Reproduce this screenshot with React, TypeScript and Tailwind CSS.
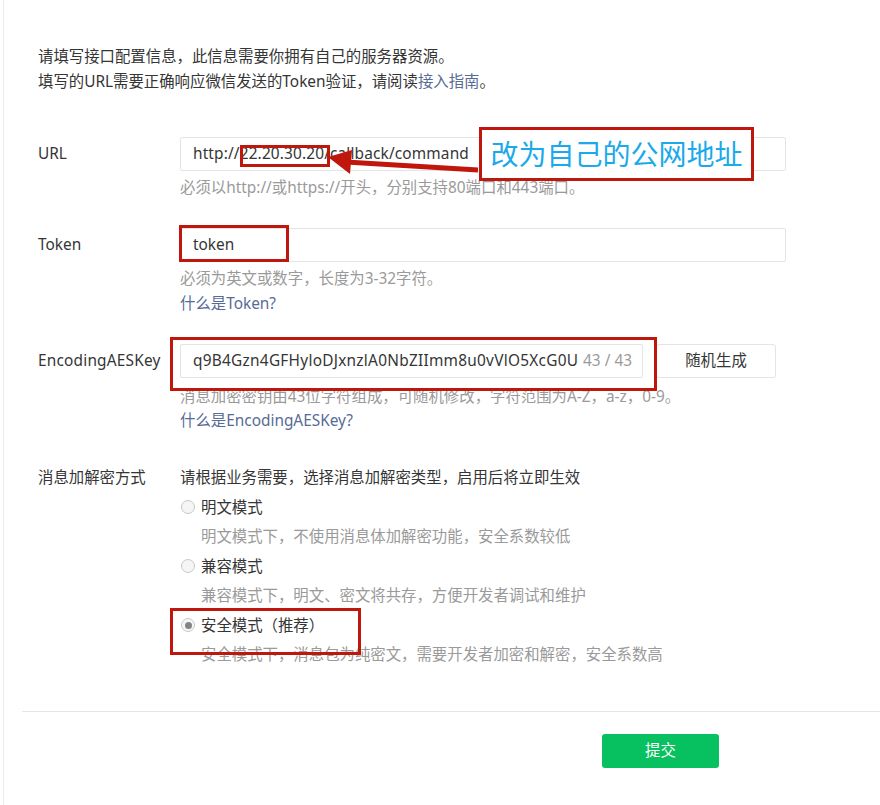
const font = "font-['Noto_Sans','Noto_Sans_CJK_SC',sans-serif]";

function Radio({ checked, label }: { checked?: boolean; label: string }) {
  return (
    <div className="flex items-center h-[29.5px]">
      <span className="ml-[1px] mr-[6px] flex h-[14px] w-[14px] items-center justify-center rounded-full border border-[#c9c9c9] bg-[#f5f5f5]">
        {checked ? <span className="h-[7px] w-[7px] rounded-full bg-[#838383]" /> : null}
      </span>
      <span>{label}</span>
    </div>
  );
}

export default function App() {
  return (
    <div className={`relative min-h-[805px] overflow-hidden bg-white text-[15.4px] text-[#353535] ${font}`}>
      <div className="ml-[3px] min-h-[805px] border-l border-[#ececec] pl-[34px] pt-[44px]">
        <div className="leading-[25px]">
          <p>请填写接口配置信息，此信息需要你拥有自己的服务器资源。</p>
          <p>
            填写的URL需要正确响应微信发送的Token验证，请阅读
            <span className="text-[#576b95]">接入指南</span>。
          </p>
        </div>

        {/* URL */}
        <div className="mt-[43px] flex">
          <div className="w-[142px] shrink-0 leading-[34px]">URL</div>
          <div className="w-[606px]">
            <div className="flex h-[34px] items-center rounded-[2px] border border-[#e4e4e4] pl-[12px] tracking-[0.15px]">
              http://22.20.30.20/callback/command
            </div>
            <p className="mt-[5px] leading-[24px] text-[#9a9a9a]">必须以http://或https://开头，分别支持80端口和443端口。</p>
          </div>
        </div>

        {/* Token */}
        <div className="mt-[28px] flex">
          <div className="w-[142px] shrink-0 leading-[34px]">Token</div>
          <div className="w-[606px]">
            <div className="flex h-[34px] items-center rounded-[2px] border border-[#e4e4e4] pl-[12px]">token</div>
            <p className="mt-[5px] leading-[24px] text-[#9a9a9a]">必须为英文或数字，长度为3-32字符。</p>
            <p className="leading-[25px] text-[#576b95]">什么是Token?</p>
          </div>
        </div>

        {/* EncodingAESKey */}
        <div className="mt-[28px] flex">
          <div className="w-[142px] shrink-0 leading-[34px] tracking-[0.2px]">EncodingAESKey</div>
          <div>
            <div className="flex">
              <div className="flex h-[34px] w-[463px] items-center justify-between rounded-[2px] border border-[#e4e4e4] pl-[12px] pr-[10px]">
                <span className="tracking-[0.26px]">q9B4Gzn4GFHyloDJxnzlA0NbZIImm8u0vVlO5XcG0U</span>
                <span className="text-[#9a9a9a]">43 / 43</span>
              </div>
              <button className="ml-[13px] h-[34px] w-[120px] rounded-[3px] border border-[#e4e4e4] bg-white">随机生成</button>
            </div>
            <p className="mt-[7px] leading-[24px] text-[#9a9a9a]">消息加密密钥由43位字符组成，可随机修改，字符范围为A-Z，a-z，0-9。</p>
            <p className="leading-[24px] text-[#576b95]">什么是EncodingAESKey?</p>
          </div>
        </div>

        {/* 消息加解密方式 */}
        <div className="mt-[30px] flex">
          <div className="w-[142px] shrink-0 leading-[29.5px]">消息加解密方式</div>
          <div className="leading-[29.5px]">
            <p>请根据业务需要，选择消息加解密类型，启用后将立即生效</p>
            <Radio label="明文模式" />
            <p className="pl-[21px] text-[#9a9a9a]">明文模式下，不使用消息体加解密功能，安全系数较低</p>
            <Radio label="兼容模式" />
            <p className="pl-[21px] text-[#9a9a9a]">兼容模式下，明文、密文将共存，方便开发者调试和维护</p>
            <Radio checked label="安全模式（推荐）" />
            <p className="pl-[21px] text-[#9a9a9a]">安全模式下，消息包为纯密文，需要开发者加密和解密，安全系数高</p>
          </div>
        </div>

        <div className="-ml-[16px] mt-[41.5px] border-t border-[#e5e5e5]" />

        <div className="mt-[22px] flex">
          <button className="ml-[564px] h-[34px] w-[117px] rounded-[3px] bg-[#07c160] text-white">提交</button>
        </div>
      </div>

      {/* annotations */}
      <div className="absolute left-[479px] top-[127px] flex h-[54px] w-[275px] items-center justify-center border-[3px] border-[#c0170c] bg-white text-[28px] leading-none text-[#1aa9ea]">
        改为自己的公网地址
      </div>
      <div className="absolute left-[240px] top-[145px] h-[22px] w-[90px] border-[3px] border-[#c0170c]" />
      <div className="absolute left-[179px] top-[225px] h-[37px] w-[110px] border-[3px] border-[#c0170c]" />
      <div className="absolute left-[170px] top-[337px] h-[54px] w-[487px] border-[3px] border-[#c0170c]" />
      <div className="absolute left-[170px] top-[608px] h-[47px] w-[191px] border-[3px] border-[#c0170c]" />
      <svg className="absolute left-0 top-0" width="880" height="805" viewBox="0 0 880 805">
        <line x1="478" y1="170" x2="346" y2="162" stroke="#c0170c" strokeWidth="5" />
        <polygon points="328,157 352,150 350,174" fill="#c0170c" />
      </svg>
    </div>
  );
}
